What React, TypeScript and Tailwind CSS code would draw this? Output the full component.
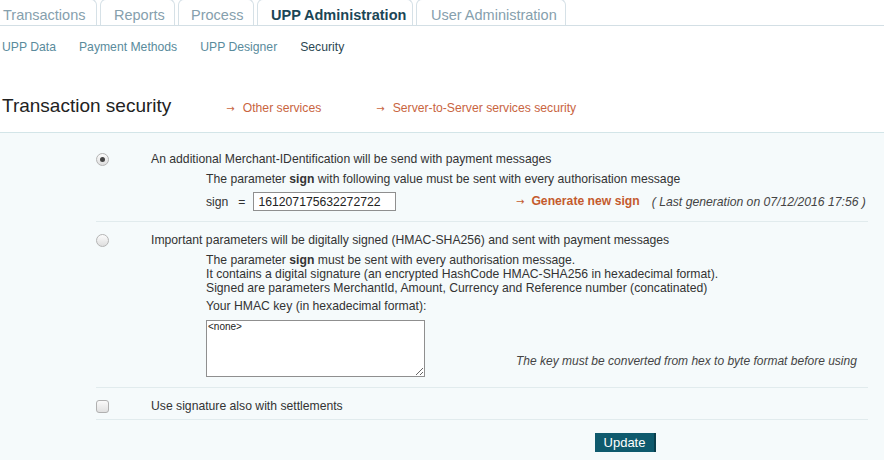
import React from "react";

function Radio({ checked }: { checked?: boolean }) {
  return (
    <span className="flex h-[13px] w-[13px] items-center justify-center rounded-full border border-[#b4b4b4] bg-gradient-to-b from-[#fcfcfc] to-[#dedede]">
      {checked && <span className="h-[5px] w-[5px] rounded-full bg-[#444]" />}
    </span>
  );
}

function Arrow({ className = "" }: { className?: string }) {
  return <span className={`font-['DejaVu_Sans',sans-serif] text-[10px] font-normal ${className}`}>→</span>;
}

export default function App() {
  const tabs = [
    { label: "Transactions", w: "w-[105px] ml-[-8px] pl-[10px]", active: false },
    { label: "Reports", w: "w-[75px] pl-[13px]", active: false },
    { label: "Process", w: "w-[76px] pl-[12px]", active: false },
    { label: "UPP Administration", w: "w-[156px] pl-[13px]", active: true },
    { label: "User Administration", w: "w-[150px] pl-[14px]", active: false },
  ];
  return (
    <div className="h-[460px] w-[884px] overflow-hidden bg-white font-['Liberation_Sans',Arial,sans-serif] text-[#333]">
      {/* tab bar */}
      <div className="flex h-[26px] items-end gap-[3px] border-b border-[#d3dfe5]">
        {tabs.map((t) => (
          <div
            key={t.label}
            className={`${t.w} h-[26px] rounded-t-[6px] border border-b-0 border-[#d6e1e7] pt-[6px] text-[14.5px] leading-[18px] ${
              t.active ? "font-bold text-[#1b4656]" : "text-[#86a0ad]"
            }`}
          >
            {t.label}
          </div>
        ))}
      </div>

      {/* sub nav */}
      <div className="mt-[14px] flex gap-[23px] pl-[2px] text-[12.2px] leading-[14px]">
        <span className="text-[#5a8b9c]">UPP Data</span>
        <span className="text-[#5a8b9c]">Payment Methods</span>
        <span className="text-[#5a8b9c]">UPP Designer</span>
        <span className="text-[#2c4752]">Security</span>
      </div>

      {/* title */}
      <div className="mt-[41px] flex items-baseline pl-[2px]">
        <span className="text-[19px] leading-[22px] text-[#222]">Transaction security</span>
        <span className="ml-[55px] text-[12.2px] text-[#c9653f]">
          <Arrow className="mr-[8px]" />
          Other services
        </span>
        <span className="ml-[55px] text-[12.2px] text-[#c9653f]">
          <Arrow className="mr-[8px]" />
          Server-to-Server services security
        </span>
      </div>

      {/* panel */}
      <div className="mt-[15px] h-[400px] border-t border-[#d3e5e8] bg-[#f5fafb]">
        <div className="ml-[96px] w-[772px] text-[12.2px] leading-[14px]">
          {/* row 1 */}
          <div className="flex border-b border-[#e1ebed] pt-[19px] pb-[10px]">
            <div className="flex h-[14px] w-[55px] items-center">
              <Radio checked />
            </div>
            <div className="flex-1">
              <div>An additional Merchant-IDentification will be send with payment messages</div>
              <div className="ml-[55px] mt-[6px]">
                The parameter <b>sign</b> with following value must be sent with every authorisation message
              </div>
              <div className="ml-[55px] mt-[6px] flex items-center">
                <div className="flex w-[310px] items-center">
                  <span>sign</span>
                  <span className="ml-[10px]">=</span>
                  <input
                    readOnly
                    value="161207175632272722"
                    className="ml-[8px] h-[19px] w-[143px] border border-[#8f8f8f] bg-white px-[4px] text-[12.2px] text-[#222] outline-none"
                  />
                </div>
                <span className="font-bold text-[#c45a2e]">
                  <Arrow className="mr-[7px]" />
                  Generate new sign
                </span>
                <span className="ml-[12px] italic text-[#444]">( Last generation on 07/12/2016 17:56 )</span>
              </div>
            </div>
          </div>

          {/* row 2 */}
          <div className="flex border-b border-[#e1ebed] pt-[11px] pb-[10px]">
            <div className="flex h-[14px] w-[55px] items-center">
              <Radio />
            </div>
            <div className="flex-1">
              <div>Important parameters will be digitally signed (HMAC-SHA256) and sent with payment messages</div>
              <div className="ml-[55px] mt-[6px]">
                <div>
                  The parameter <b>sign</b> must be sent with every authorisation message.
                </div>
                <div>It contains a digital signature (an encrypted HashCode HMAC-SHA256 in hexadecimal format).</div>
                <div>Signed are parameters MerchantId, Amount, Currency and Reference number (concatinated)</div>
                <div className="mt-[4px]">Your HMAC key (in hexadecimal format):</div>
                <div className="mt-[7px] flex items-end">
                  <textarea
                    readOnly
                    value="<none>"
                    className="h-[57px] w-[219px] resize border border-[#8f8f8f] bg-white px-[1px] py-0 text-[10px] leading-[12px] text-[#222] outline-none"
                  />
                  <span className="ml-[91px] pb-[9px] text-[12px] italic text-[#444]">
                    The key must be converted from hex to byte format before using
                  </span>
                </div>
              </div>
            </div>
          </div>

          {/* row 3 */}
          <div className="flex border-b border-[#e1ebed] pt-[11px] pb-[6px]">
            <div className="flex h-[14px] w-[55px] items-center">
              <span className="h-[13px] w-[13px] rounded-[3px] border border-[#b0b0b0] bg-gradient-to-b from-[#fafafa] to-[#e0e0e0]" />
            </div>
            <div>Use signature also with settlements</div>
          </div>

          {/* button */}
          <div className="mt-[13px] pl-[499px]">
            <button className="h-[19px] w-[61px] border-r-2 border-[#0a3e4c] bg-[#0f5a6d] text-[13px] leading-[19px] text-white">
              Update
            </button>
          </div>
        </div>
      </div>
    </div>
  );
}
